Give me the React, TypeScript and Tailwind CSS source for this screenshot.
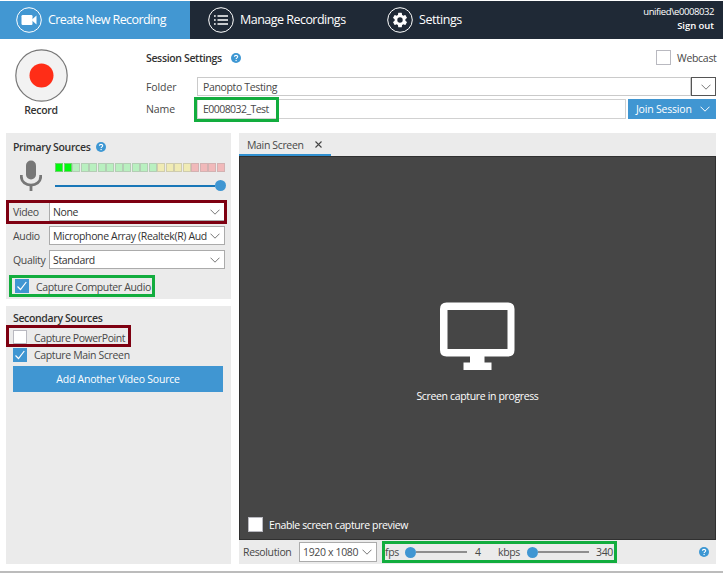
import type { ReactNode } from "react";

function Help() {
  return (
    <svg className="block size-[10px] shrink-0" viewBox="0 0 10 10">
      <circle cx="5" cy="5" r="5" fill="#3d97d3" />
      <path d="M3.4 3.8C3.4 1.9 6.7 1.9 6.7 3.8C6.7 4.9 5.1 4.8 5.1 6.1" fill="none" stroke="#fff" strokeWidth="1.1" />
      <rect x="4.5" y="6.9" width="1.2" height="1.2" fill="#fff" />
    </svg>
  );
}

function Chevron({ className = "text-[#777]" }: { className?: string }) {
  return (
    <svg className={`block h-[6px] w-[10px] shrink-0 ${className}`} viewBox="0 0 10 6">
      <path d="M0.5 0.7L5 5.2L9.5 0.7" fill="none" stroke="currentColor" strokeWidth="1" />
    </svg>
  );
}

function CheckBox({ checked = false, className = "" }: { checked?: boolean; className?: string }) {
  return (
    <span className={`block size-[14px] shrink-0 ${checked ? "bg-[#4096d2]" : "border border-[#b9b9c0] bg-white"} ${className}`}>
      {checked && (
        <svg className="block size-[14px]" viewBox="0 0 14 14">
          <path d="M2.5 7.5L5.5 10.5L11.3 3" fill="none" stroke="#fff" strokeWidth="1.2" />
        </svg>
      )}
    </span>
  );
}

function SelectRow({ label, value, className }: { label: string; value: string; className: string }) {
  return (
    <div className={`flex h-[19px] items-center ${className}`}>
      <span className="w-[36px] shrink-0">{label}</span>
      <div className="flex h-full w-[176px] items-center border border-[#ababab] bg-white pr-[4px] pl-[3px]">
        <span className="w-[154px] overflow-hidden text-[#333]">{value}</span>
        <span className="ml-auto"><Chevron /></span>
      </div>
    </div>
  );
}

function RoundIcon({ children }: { children: ReactNode }) {
  return (
    <svg className="block size-[26px] shrink-0" viewBox="0 0 26 26">
      <circle cx="13" cy="13" r="12.3" fill="none" stroke="#fff" strokeWidth="1" />
      {children}
    </svg>
  );
}

function Range() {
  return (
    <div className="flex h-[11px] w-[62px] items-center">
      <span className="size-[11px] rounded-full bg-[#4096d2]" />
      <span className="h-[2px] flex-1 bg-[#8e8e8e]" />
    </div>
  );
}

const METER = [
  ...Array(2).fill("border-[#6fcf6f] bg-[#00fa0c]"),
  ...Array(10).fill("border-[#b4cdb5] bg-[#b9f0c0]"),
  ...Array(4).fill("border-[#cfccae] bg-[#f0ebb4]"),
  ...Array(4).fill("border-[#d3b2b2] bg-[#f1b9ba]"),
];

export default function App() {
  return (
    <div className="relative flex h-[573px] w-[723px] flex-col overflow-hidden bg-white font-['Open_Sans','Noto_Sans',sans-serif] text-[10.5px] leading-[14px] tracking-[-0.35px] whitespace-nowrap text-[#484848]">
      <header className="mt-px flex h-[38px] shrink-0 bg-[#1f2936] text-[12.5px] text-white">
        <div className="flex w-[190px] items-center bg-[#4297d2] pl-[16px]">
          <RoundIcon>
            <rect x="5.5" y="8" width="11" height="10" rx="1.2" fill="#fff" />
            <path d="M16 12.5L20.5 8.5V17.5L16 13.500Z" fill="#fff" />
          </RoundIcon>
          <span className="ml-[6px] tracking-[-0.59px]">Create New Recording</span>
        </div>
        <div className="flex w-[179px] items-center pl-[18px]">
          <RoundIcon>
            <path d="M9.500 9H20M9.500 13H20M9.500 17H20" stroke="#fff" strokeWidth="1.5" />
            <path d="M6 9H7.700M6 13H7.700M6 17H7.700" stroke="#fff" strokeWidth="1.6" />
          </RoundIcon>
          <span className="ml-[6px] tracking-[-0.52px]">Manage Recordings</span>
        </div>
        <div className="flex w-[120px] items-center pl-[18px]">
          <RoundIcon>
            <svg x="4" y="4" width="18" height="18" viewBox="0 0 24 24">
              <path fill="#fff" d="M19.14 12.94c.04-.3.06-.61.06-.94s-.02-.64-.07-.94l2.03-1.58a.49.49 0 0 0 .12-.61l-1.92-3.32a.49.49 0 0 0-.59-.22l-2.39.96a7 7 0 0 0-1.62-.94l-.36-2.54a.48.48 0 0 0-.48-.41h-3.84a.47.47 0 0 0-.47.41l-.36 2.54c-.59.24-1.13.57-1.62.94l-2.39-.96a.48.48 0 0 0-.59.22L2.74 8.87a.48.48 0 0 0 .12.61l2.03 1.58a7 7 0 0 0 0 1.88l-2.03 1.58a.49.49 0 0 0-.12.61l1.92 3.32c.12.22.37.29.59.22l2.39-.96c.5.38 1.03.7 1.62.94l.36 2.54c.05.24.24.41.48.41h3.84c.24 0 .44-.17.47-.41l.36-2.54a7 7 0 0 0 1.62-.94l2.39.96c.22.08.47 0 .59-.22l1.92-3.32a.47.47 0 0 0-.12-.61zM12 15.6a3.6 3.6 0 1 1 0-7.2 3.6 3.6 0 0 1 0 7.2" />
            </svg>
          </RoundIcon>
          <span className="ml-[6px] tracking-[-0.45px]">Settings</span>
        </div>
        <div className="ml-auto flex flex-col items-end pt-[4px] pr-[9px] text-[9.5px]">
          <span className="tracking-[-0.43px]">unified\e0008032</span>
          <span className="font-semibold tracking-[-0.05px]">Sign out</span>
        </div>
      </header>

      <section className="flex h-[94px] shrink-0">
        <div className="flex w-[82px] flex-col items-center pt-[10px]">
          <svg className="block size-[53px]" viewBox="0 0 53 53">
            <circle cx="26.500" cy="26.500" r="25.7" fill="#f2f2f2" stroke="#777" strokeWidth="1.2" />
            <circle cx="26.500" cy="26.500" r="12" fill="#ff2d17" />
          </svg>
          <span className="mt-px font-semibold text-[#333] tracking-[-0.3px]">Record</span>
        </div>
        <div className="ml-[64px] w-[570px]">
          <div className="flex h-[37px] items-center">
            <span className="w-[84px] shrink-0 pt-px font-semibold text-[#333]">Session Settings</span>
            <span className="ml-px"><Help /></span>
            <CheckBox className="ml-auto size-[15px]!" />
            <span className="ml-[6px] w-[39px] pt-px tracking-[-0.3px]">Webcast</span>
          </div>
          <div className="mt-px flex h-[19px] items-center">
            <span className="w-[51px] shrink-0 tracking-[-0.1px]">Folder</span>
            <div className="flex h-full w-[494px] items-center border border-[#cacaca] pt-px pl-[5px]">Panopto Testing</div>
            <div className="flex h-full w-[25px] items-center justify-center border border-[#555] pl-[5px]"><Chevron /></div>
          </div>
          <div className="mt-[3px] flex h-[20px] items-center">
            <span className="w-[51px] shrink-0 tracking-[-0.1px]">Name</span>
            <div className="flex h-full w-[429px] items-center border border-[#d1d1d1] pl-[5px] tracking-[-0.55px]">E0008032_Test</div>
            <div className="ml-[2px] flex h-full w-[88px] items-center bg-[#4096d2] pr-[6px] pl-[8px] text-white">
              <span className="tracking-[-0.2px]">Join Session</span><span className="ml-auto"><Chevron className="text-white" /></span>
            </div>
          </div>
        </div>
      </section>

      <main className="flex h-[431px] shrink-0 pl-[6px]">
        <div className="flex w-[225px] flex-col gap-[7px]">
          <section className="h-[166px] bg-[#ebebeb] pl-[7px]">
            <div className="flex h-[28px] items-center">
              <span className="w-[83px] shrink-0 font-semibold text-[#333]">Primary Sources</span>
              <Help />
            </div>
            <div className="flex h-[36px]">
              <svg className="mt-[-1px] ml-[7px] block h-[32px] w-[22px]" viewBox="0 0 22 32">
                <rect x="6" y="0.5" width="10" height="19" rx="5" fill="#777" />
                <path d="M1.300 15V16.500C1.300 28 20.700 28 20.700 16.500V15M11 24.500V31" fill="none" stroke="#777" strokeWidth="2.8" />
              </svg>
              <div className="ml-[12px] w-[172px] pt-[2px] pl-px">
                <div className="flex h-[9px] w-[170px] justify-between">
                  {METER.map((tone, i) => <span key={i} className={`w-[8px] border ${tone}`} />)}
                </div>
                <div className="mt-[8px] flex h-[11px] items-center">
                  <span className="h-[2px] flex-1 bg-[#1977b8]" />
                  <span className="size-[11px] rounded-full bg-[#4096d2]" />
                </div>
              </div>
            </div>
            <SelectRow label="Video" value="None" className="mt-[5px]" />
            <SelectRow label="Audio" value="Microphone Array (Realtek(R) Audio)" className="mt-[5px]" />
            <SelectRow label="Quality" value="Standard" className="mt-[5px]" />
            <div className="mt-[10px] flex h-[14px] items-center pl-[2px]">
              <CheckBox checked /><span className="ml-[7px] pt-[2px]">Capture Computer Audio</span>
            </div>
          </section>
          <section className="flex-1 bg-[#ebebeb] pt-[5px] pl-[7px]">
            <div className="font-semibold text-[#333]">Secondary Sources</div>
            <div className="mt-[5px] flex h-[14px] items-center">
              <CheckBox /><span className="ml-[7px] pt-[2px] tracking-[-0.4px]">Capture PowerPoint</span>
            </div>
            <div className="mt-[4px] flex h-[14px] items-center">
              <CheckBox checked /><span className="ml-[7px]">Capture Main Screen</span>
            </div>
            <div className="mt-[4px] flex h-[26px] w-[210px] items-center justify-center bg-[#4096d2] tracking-[-0.22px] text-white">Add Another Video Source</div>
          </section>
        </div>

        <section className="ml-[8px] flex w-[477px] flex-col bg-[#ebebeb]">
          <div className="flex h-[23px] shrink-0">
            <div className="flex w-[92px] items-center border-b-2 border-[#3090d0] pt-[2px] pl-[8px]">
              <span>Main Screen</span>
              <svg className="ml-[11px] block size-[7px]" viewBox="0 0 7 7"><path d="M0.5 0.5L6.5 6.5M6.5 0.5L0.5 6.5" stroke="#444" strokeWidth="1.1" /></svg>
            </div>
          </div>
          <div className="flex h-[384px] shrink-0 flex-col border border-[#303030] bg-[#464646] text-white">
            <svg className="mt-[145px] ml-[199.5px] block h-[69px] w-[75px]" viewBox="0 0 75 69">
              <path fillRule="evenodd" fill="#fff" d="M6.500 0.500H68Q74.500 0.500 74.500 7V48Q74.500 54.500 68 54.500H44.500V60.500H51.500V68H23.500V60.500H30V54.500H6.500Q0 54.500 0 48V7Q0 0.500 6.500 0.500ZM7.500 8V47H67.500V8Z" />
            </svg>
            <span className="mt-[18px] text-center">Screen capture in progress</span>
            <div className="mt-auto mb-[7px] flex h-[15px] items-center pl-[8px]">
              <CheckBox className="size-[15px]!" /><span className="ml-[6px] pt-px tracking-[-0.38px]">Enable screen capture preview</span>
            </div>
          </div>
          <div className="flex h-[24px] items-center pl-[4px]">
            <span className="w-[56px] shrink-0">Resolution</span>
            <div className="flex h-[20px] w-[78px] items-center border border-[#ababab] bg-white pr-[4px] pl-[3px]">
              <span>1920 x 1080</span><span className="ml-auto"><Chevron /></span>
            </div>
            <span className="ml-[8px] w-[20px]">fps</span>
            <Range />
            <span className="ml-[8px] w-[23px]">4</span>
            <span className="w-[29px]">kbps</span>
            <Range />
            <span className="ml-[7px]">340</span>
            <span className="mr-[7px] ml-auto"><Help /></span>
          </div>
        </section>
      </main>

      <footer className="mt-[7px] h-[2px] shrink-0 bg-[#bcbcbc]" />

      <div className="absolute top-[97px] left-[194px] h-[25px] w-[85px] border-3 border-[#12ad3e]" />
      <div className="absolute top-[200px] left-[6px] h-[24px] w-[221px] border-3 border-[#7e0011]" />
      <div className="absolute top-[275px] left-[9px] h-[22px] w-[146px] border-3 border-[#12ad3e]" />
      <div className="absolute top-[325px] left-[6px] h-[22px] w-[125px] border-3 border-[#7e0011]" />
      <div className="absolute top-[541px] left-[382px] h-[22px] w-[235px] border-3 border-[#12ad3e]" />
    </div>
  );
}
